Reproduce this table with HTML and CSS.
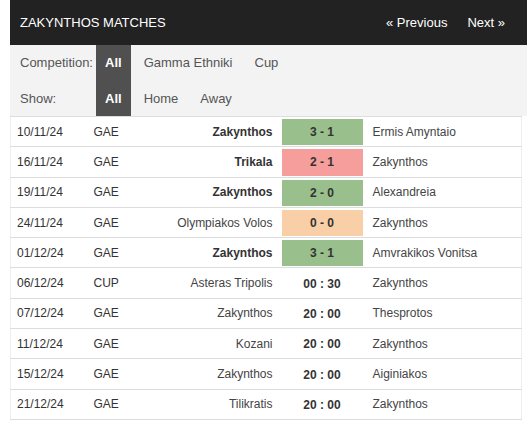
FILE: index.html
```html
<!DOCTYPE html>
<html lang="en">
<head>
    <meta charset="UTF-8">
    <meta name="viewport" content="width=device-width, initial-scale=1.0">
    <title>Zakynthos Matches</title>
    <link rel="stylesheet" href="styles.css">
</head>
<body>
    <div class="header">
        <span class="title">ZAKYNTHOS MATCHES</span>
        <div class="nav">
            <a href="#">&laquo; Previous</a>
            <a href="#">Next &raquo;</a>
        </div>
    </div>

    <div class="filters">
        <div class="filter-row">
            <span class="filter-label">Competition:</span>
            <a href="#" class="active">All</a>
            <a href="#">Gamma Ethniki</a>
            <a href="#">Cup</a>
        </div>
        <div class="filter-row">
            <span class="filter-label">Show:</span>
            <a href="#" class="active">All</a>
            <a href="#">Home</a>
            <a href="#">Away</a>
        </div>
    </div>

    <table class="matches">
        <colgroup>
            <col class="c-date">
            <col class="c-comp">
            <col class="c-home">
            <col class="c-score">
            <col class="c-away">
        </colgroup>
        <tbody>
            <tr>
                <td>10/11/24</td><td>GAE</td>
                <td class="home"><b>Zakynthos</b></td>
                <td class="score"><div class="win">3 - 1</div></td>
                <td class="away">Ermis Amyntaio</td>
            </tr>
            <tr>
                <td>16/11/24</td><td>GAE</td>
                <td class="home"><b>Trikala</b></td>
                <td class="score"><div class="loss">2 - 1</div></td>
                <td class="away">Zakynthos</td>
            </tr>
            <tr>
                <td>19/11/24</td><td>GAE</td>
                <td class="home"><b>Zakynthos</b></td>
                <td class="score"><div class="win">2 - 0</div></td>
                <td class="away">Alexandreia</td>
            </tr>
            <tr>
                <td>24/11/24</td><td>GAE</td>
                <td class="home">Olympiakos Volos</td>
                <td class="score"><div class="draw">0 - 0</div></td>
                <td class="away">Zakynthos</td>
            </tr>
            <tr>
                <td>01/12/24</td><td>GAE</td>
                <td class="home"><b>Zakynthos</b></td>
                <td class="score"><div class="win">3 - 1</div></td>
                <td class="away">Amvrakikos Vonitsa</td>
            </tr>
            <tr>
                <td>06/12/24</td><td>CUP</td>
                <td class="home">Asteras Tripolis</td>
                <td class="score"><div>00 : 30</div></td>
                <td class="away">Zakynthos</td>
            </tr>
            <tr>
                <td>07/12/24</td><td>GAE</td>
                <td class="home">Zakynthos</td>
                <td class="score"><div>20 : 00</div></td>
                <td class="away">Thesprotos</td>
            </tr>
            <tr>
                <td>11/12/24</td><td>GAE</td>
                <td class="home">Kozani</td>
                <td class="score"><div>20 : 00</div></td>
                <td class="away">Zakynthos</td>
            </tr>
            <tr>
                <td>15/12/24</td><td>GAE</td>
                <td class="home">Zakynthos</td>
                <td class="score"><div>20 : 00</div></td>
                <td class="away">Aiginiakos</td>
            </tr>
            <tr>
                <td>21/12/24</td><td>GAE</td>
                <td class="home">Tilikratis</td>
                <td class="score"><div>20 : 00</div></td>
                <td class="away">Zakynthos</td>
            </tr>
        </tbody>
    </table>
</body>
</html>
```

FILE: styles.css
```css
body {
    font-family: "Liberation Sans", Arial, sans-serif;
    background-color: #fff;
    color: #333;
    margin: 0;
    padding-left: 10px;
}

a {
    text-decoration: none;
}

.header {
    display: flex;
    justify-content: space-between;
    align-items: center;
    height: 45px;
    padding: 0 22px 0 10px;
    background-color: #222;
    color: #fff;
    font-size: 13px;
}

.nav {
    display: flex;
    gap: 20px;
}

.nav a {
    color: #fff;
}

.filters {
    background-color: #f3f3f3;
    padding-left: 10px;
    font-size: 13px;
}

.filter-row {
    display: flex;
    align-items: stretch;
    height: 35.5px;
}

.filter-label {
    width: 76px;
    display: flex;
    align-items: center;
    color: #555;
}

.filter-row a {
    display: flex;
    align-items: center;
    padding: 0 9px;
    margin-right: 4px;
    color: #555;
}

.filter-row a.active {
    background-color: #505050;
    color: #fff;
    font-weight: bold;
}

.matches {
    width: 512px;
    border-collapse: collapse;
    table-layout: fixed;
    font-size: 12px;
    border-left: 1px solid #eee;
    border-right: 1px solid #eee;
}

.c-date { width: 77px; }
.c-comp { width: 63px; }
.c-home { width: 131px; }
.c-score { width: 81px; }

.matches td {
    padding: 0 0 0 6px;
    border-top: 1px solid #ddd;
    border-bottom: 1px solid #ddd;
    white-space: nowrap;
}

.matches td.home {
    text-align: right;
    padding: 0 9px 0 0;
    color: #444;
}

.matches td.home b {
    color: #333;
}

.matches td.score {
    padding: 2px 0 1px;
}

.score div {
    height: 26.3px;
    display: flex;
    align-items: center;
    justify-content: center;
    font-weight: bold;
    color: #333;
}

.score .win {
    background-color: #99bf8d;
}

.score .loss {
    background-color: #f59e9b;
}

.score .draw {
    background-color: #f8cfa6;
}

.matches td.away {
    padding-left: 10px;
    color: #444;
}
```
